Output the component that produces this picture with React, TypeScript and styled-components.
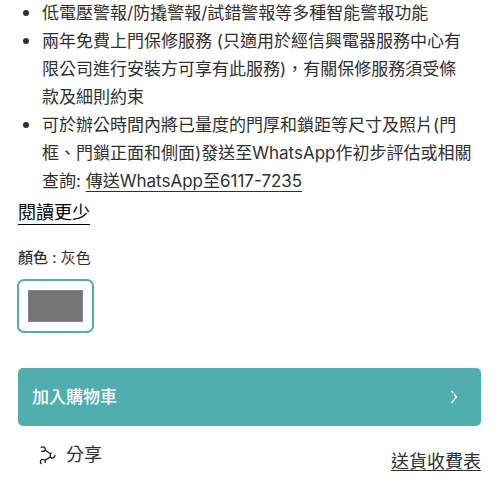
import React from "react";
import styled, { createGlobalStyle } from "styled-components";

const GlobalStyle = createGlobalStyle`
  * { box-sizing: border-box; }
  body {
    margin: 0;
    background: #fff;
    color: #303030;
    font-family: Inter, "Noto Sans CJK TC", sans-serif;
    font-size: 17px;
    line-height: 28px;
  }
`;

const Page = styled.main`
  padding: 0 19px 24px 18px;
`;

const FeatureList = styled.ul`
  margin: -1px 0 0;
  padding: 0 0 0 24px;
  white-space: nowrap;
`;

const Feature = styled.li`
  &::marker {
    font-family: "Noto Sans", sans-serif;
  }
`;

const TextLink = styled.a`
  color: inherit;
  text-decoration: underline;
  text-decoration-thickness: 1px;
  text-underline-offset: 4px;
`;

const ReadLess = styled.button`
  display: block;
  margin: 7px 0 0;
  padding: 0;
  border: 0;
  border-bottom: 1px solid #000;
  background: none;
  color: #000;
  font: inherit;
  font-size: 18px;
  line-height: 22px;
`;

const Options = styled.fieldset`
  margin: 21px 0 0;
  padding: 0;
  border: 0;
`;

const OptionName = styled.legend`
  padding: 0;
  font-size: 15px;
  line-height: 24px;

  strong {
    font-weight: 500;
  }
`;

const Swatch = styled.label`
  display: block;
  width: 77px;
  height: 54px;
  margin: 9px 0 0 -1px;
  padding: 9px;
  border: 2px solid #50aeae;
  border-radius: 7px;
`;

const SwatchInput = styled.input<{ $color: string }>`
  appearance: none;
  display: block;
  width: 100%;
  height: 100%;
  margin: 0;
  border: 1px solid #858585;
  background: ${(p) => p.$color};
`;

const CartButton = styled.button`
  display: flex;
  align-items: center;
  justify-content: space-between;
  width: 100%;
  height: 58px;
  margin-top: 35px;
  padding: 0 22px 0 14px;
  border: 0;
  border-radius: 5px;
  background: #50aeae;
  color: #fff;
  font: inherit;
  font-weight: 500;
`;

const Footer = styled.div`
  display: flex;
  align-items: flex-start;
  justify-content: space-between;
  margin-top: 15px;
  padding-left: 20px;
  font-size: 18px;
`;

const ShareButton = styled.button`
  display: flex;
  align-items: center;
  gap: 8px;
  padding: 0;
  border: 0;
  background: none;
  color: inherit;
  font: inherit;
`;

const DeliveryLink = styled(TextLink)`
  margin-top: 7px;
  text-underline-offset: 2px;
`;

const ShareIcon = () => (
  <svg width="20" height="20" viewBox="0 0 20 20" fill="none" stroke="#222" strokeWidth="1.4" aria-hidden="true">
    <path d="M2.8 2.6C4.8 1 7.6 2.4 7.3 4.6 7 6.4 5 6.8 3.4 6" />
    <path d="M7.3 5.2 12.3 8.8V12.2L7.3 15.2" />
    <path d="M12.3 8.8 13.6 7.8M17 10C17 12.6 14.2 13.8 12.3 12.2" />
    <path d="M3.6 18.8C1.4 17.4 2.4 14.4 4.8 14.4 7 14.4 8 16.6 6.8 17.8" />
  </svg>
);

const ArrowIcon = () => (
  <svg width="10" height="16" viewBox="0 0 10 16" fill="none" stroke="#fff" strokeWidth="1.3" aria-hidden="true">
    <path d="M2.5 2 4.2 4M5 5l2.5 3L2.5 14" />
  </svg>
);

export default function App() {
  return (
    <>
      <GlobalStyle />
      <Page lang="zh-Hant">
        <FeatureList>
          <Feature>低電壓警報/防撬警報/試錯警報等多種智能警報功能</Feature>
          <Feature>
            兩年免費上門保修服務 (只適用於經信興電器服務中心有
            <br />
            限公司進行安裝方可享有此服務)，有關保修服務須受條
            <br />
            款及細則約束
          </Feature>
          <Feature>
            可於辦公時間內將已量度的門厚和鎖距等尺寸及照片(門
            <br />
            框、門鎖正面和側面)發送至WhatsApp作初步評估或相關
            <br />
            查詢: <TextLink href="#whatsapp">傳送WhatsApp至6117-7235</TextLink>
          </Feature>
        </FeatureList>
        <ReadLess type="button">閱讀更少</ReadLess>
        <Options>
          <OptionName>
            <strong>顏色</strong> : 灰色
          </OptionName>
          <Swatch>
            <SwatchInput type="radio" name="color" aria-label="灰色" defaultChecked $color="#757575" />
          </Swatch>
        </Options>
        <CartButton type="button">
          加入購物車
          <ArrowIcon />
        </CartButton>
        <Footer>
          <ShareButton type="button">
            <ShareIcon />
            分享
          </ShareButton>
          <DeliveryLink href="#delivery">送貨收費表</DeliveryLink>
        </Footer>
      </Page>
    </>
  );
}
